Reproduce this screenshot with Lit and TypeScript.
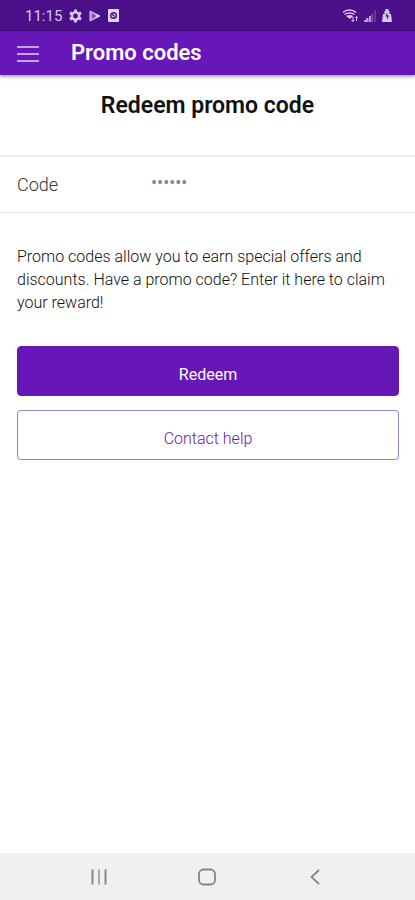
import { LitElement, html, css } from "lit";
import { customElement, state } from "lit/decorators.js";

@customElement("status-bar")
class StatusBar extends LitElement {
  static styles = css`
    :host {
      display: flex;
      align-items: center;
      justify-content: space-between;
      height: 31px;
      padding: 0 23px 0 25px;
      background: #4b0f8a;
      color: #d8c8ea;
      font-size: 15px;
      line-height: 20px;
    }
    .group {
      display: flex;
      align-items: center;
      gap: 7px;
    }
    .right {
      gap: 6px;
    }
    svg {
      display: block;
    }
  `;

  render() {
    return html`
      <div class="group">
        <span>11:15</span>
        <svg width="13" height="14" viewBox="0 0 24 24" fill="currentColor" aria-hidden="true">
          <path fill-rule="evenodd" d="M9.5 0h5l.7 3.6 2.2 1.3L21 3.700l2.500 4.300-2.800 2.500v3l2.800 2.500-2.500 4.300-3.600-1.200-2.200 1.300-.7 3.600h-5l-.7-3.600-2.200-1.300L3 20.300.5 16l2.800-2.500v-3L.5 8 3 3.700l3.600 1.200 2.200-1.300zM12 7.500a4.500 4.500 0 1 0 0 9 4.500 4.500 0 0 0 0-9z" />
        </svg>
        <svg width="12" height="12" viewBox="0 0 12 12" aria-hidden="true">
          <path d="M1 1v10l10-5z" fill="#a98acb" stroke="currentColor" stroke-width="1" stroke-linejoin="round" />
          <path d="M3.500 4v4l3-2z" fill="#6d3ba3" />
          <path d="M7 4l4 2-4 2z" fill="currentColor" />
        </svg>
        <svg width="11" height="13" viewBox="0 0 11 13" aria-hidden="true">
          <rect width="11" height="13" rx="1" fill="#e2d5ef" />
          <circle cx="5.500" cy="6.500" r="2.800" fill="none" stroke="#4b0f8a" stroke-width="1.400" />
          <path d="M3.500 4.500l3 3" stroke="#4b0f8a" stroke-width="1.200" />
        </svg>
      </div>
      <div class="group right">
        <svg width="16" height="13" viewBox="0 0 16 13" fill="none" stroke="currentColor" aria-hidden="true">
          <path d="M1 3.500c3.500-3.300 9.500-3.300 13 0" stroke-width="1.600" />
          <path d="M2.500 5.500c2.800-2 7.200-2 10 0" stroke-width="1.500" />
          <path d="M4 7c2-1.200 5-1.200 7 0L8 10z" fill="currentColor" stroke="none" />
          <path d="M11 7.500v5M9.500 11l1.500 1.500 1-1.500M14.500 12V7.500M13.500 9l1-1.500 1 1.500" stroke-width="1" />
        </svg>
        <svg width="12" height="13" viewBox="0 0 12 13" aria-hidden="true">
          <path d="M0 13v-2h2v2zM2 13V9h2.500v4zM5 13V7h2v6z" fill="#b79bd4" />
          <path d="M7.500 13V5H9v8zM10.500 13V1h1v12z" fill="#8560ae" />
        </svg>
        <svg width="10" height="13" viewBox="0 0 10 13" aria-hidden="true">
          <path d="M3.500 0h3v2h1v3H9l1 8H0l1-8h1.500V2h1z" fill="currentColor" />
          <path d="M5 3.500L3.500 7.500H5V11l2-4.500H5.500z" fill="#4b0f8a" />
        </svg>
      </div>
    `;
  }
}

@customElement("system-nav")
class SystemNav extends LitElement {
  static styles = css`
    :host {
      display: flex;
      align-items: center;
      justify-content: center;
      gap: 76px;
      height: 47px;
      padding-right: 2px;
      background: #f0f0f0;
      color: #858585;
    }
    button {
      display: flex;
      align-items: center;
      justify-content: center;
      width: 32px;
      height: 40px;
      padding: 0;
      border: 0;
      background: none;
      color: inherit;
      cursor: pointer;
    }
  `;

  render() {
    return html`
      <button aria-label="Recent apps">
        <svg width="18" height="18" viewBox="0 0 18 18" stroke="currentColor" stroke-width="2">
          <path d="M2.500 1.500v15M15.500 1.500v15" />
          <path d="M9 1.500v15" stroke="#a8a8a8" />
        </svg>
      </button>
      <button aria-label="Home">
        <svg width="18" height="18" viewBox="0 0 18 18" fill="none" stroke="currentColor" stroke-width="1.800">
          <rect x="1" y="1.500" width="16" height="15" rx="4.500" />
        </svg>
      </button>
      <button aria-label="Back">
        <svg width="18" height="18" viewBox="0 0 18 18" fill="none" stroke="currentColor" stroke-width="1.800">
          <path d="M13 2L5.500 9l7.500 7" />
        </svg>
      </button>
    `;
  }
}

@customElement("app-root")
class AppRoot extends LitElement {
  static styles = css`
    :host {
      display: flex;
      flex-direction: column;
      min-height: 100vh;
      background: #fff;
      font-family: Roboto, "Liberation Sans", sans-serif;
      color: #111;
    }
    .bar {
      display: flex;
      align-items: center;
      gap: 31px;
      height: 44px;
      padding: 0 16px;
      background: #6716b8;
      box-shadow: 0 1px 4px rgba(0, 0, 0, 0.5);
      color: #fff;
    }
    .menu {
      display: flex;
      flex-direction: column;
      gap: 5px;
      width: 24px;
      padding: 2px 1px 0;
      border: 0;
      background: none;
      cursor: pointer;
    }
    .line {
      height: 2px;
      background: #c3a2e6;
    }
    h1,
    h2,
    p {
      margin: 0;
    }
    h1 {
      font-size: 22px;
      line-height: 28px;
      font-weight: 600;
    }
    main {
      flex: 1;
    }
    h2 {
      padding: 17px 16px 35px;
      font-size: 23px;
      line-height: 28px;
      font-weight: 600;
      text-align: center;
      color: #111;
    }
    .field {
      display: flex;
      align-items: center;
      height: 55px;
      padding: 0 16px 0 17px;
      border-top: 2px solid #ececec;
      border-bottom: 1px solid #e6e6e6;
    }
    label {
      width: 134px;
      font-size: 18px;
      line-height: 24px;
      font-weight: 300;
      color: #333;
    }
    input {
      flex: 1;
      min-width: 0;
      height: 40px;
      padding: 0 0 4px;
      border: 0;
      outline: 0;
      background: none;
      font: inherit;
      font-size: 18px;
      color: #333;
    }
    input::placeholder {
      color: #888;
      opacity: 1;
    }
    p {
      padding: 32px 16px 32px 17px;
      font-size: 16px;
      line-height: 23px;
      font-weight: 300;
    }
    .actions {
      display: flex;
      flex-direction: column;
      gap: 14px;
      padding: 0 16px 0 17px;
    }
    .action {
      height: 50px;
      padding: 8px 0 0;
      border: 1px solid #6716b8;
      border-radius: 4px;
      background: #6716b8;
      color: #fff;
      font: inherit;
      font-size: 16px;
      line-height: 20px;
      cursor: pointer;
    }
    .outline {
      border-color: #9a80cc;
      background: #fff;
      color: #6716b8;
      font-weight: 300;
    }
  `;

  @state() private code = "";

  render() {
    return html`
      <status-bar></status-bar>
      <header class="bar">
        <button class="menu" aria-label="Open menu">
          <span class="line"></span>
          <span class="line"></span>
          <span class="line"></span>
        </button>
        <h1>Promo codes</h1>
      </header>
      <main>
        <h2>Redeem promo code</h2>
        <div class="field">
          <label for="code">Code</label>
          <input
            id="code"
            type="text"
            placeholder="••••••"
            .value=${this.code}
            @input=${(e: Event) => (this.code = (e.target as HTMLInputElement).value)}
          />
        </div>
        <p>
          Promo codes allow you to earn special offers and discounts. Have a promo code? Enter it
          here to claim your reward!
        </p>
        <div class="actions">
          <button class="action">Redeem</button>
          <button class="action outline">Contact help</button>
        </div>
      </main>
      <system-nav></system-nav>
    `;
  }
}
